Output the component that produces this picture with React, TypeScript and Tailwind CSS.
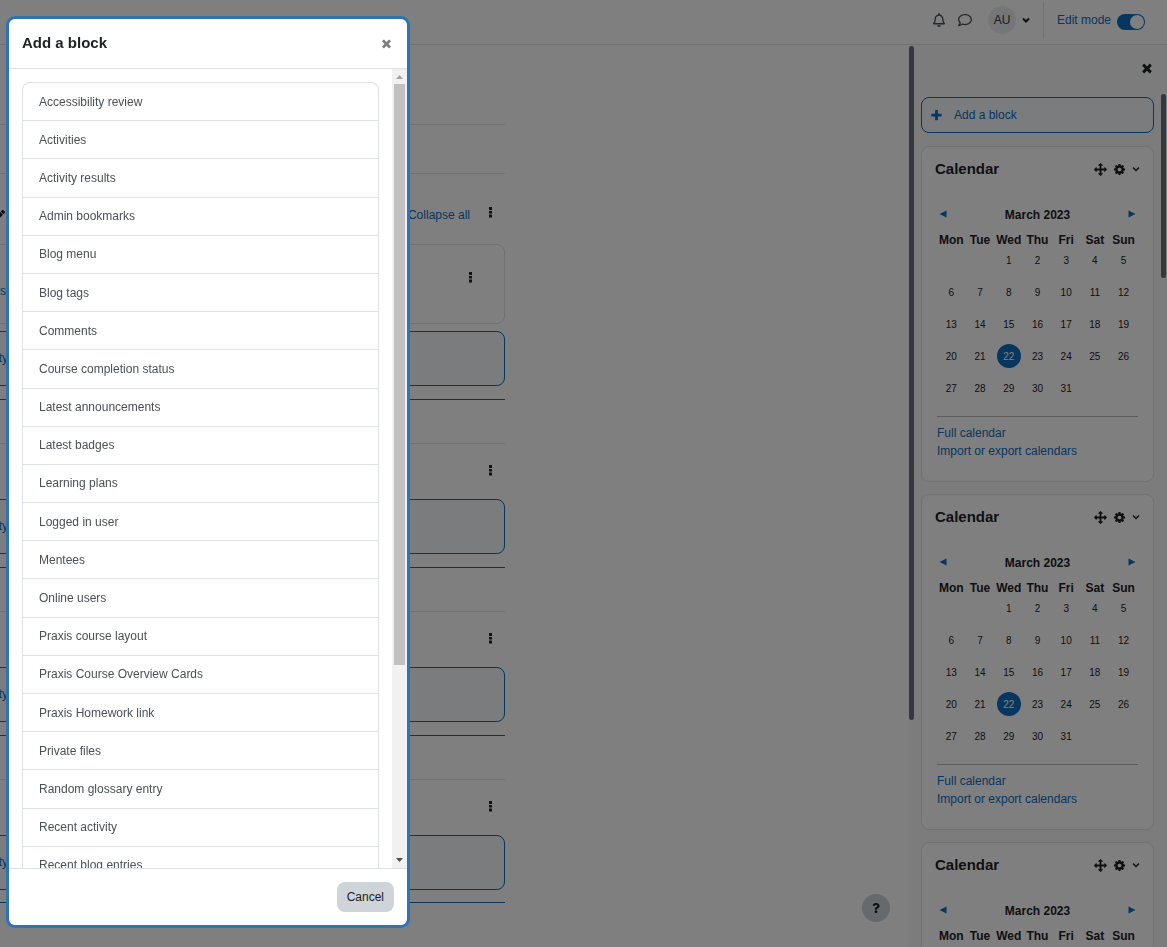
import { FaRegBell, FaRegComment, FaPen, FaQuestion } from "react-icons/fa";

const blocks = [
  "Accessibility review", "Activities", "Activity results", "Admin bookmarks", "Blog menu", "Blog tags",
  "Comments", "Course completion status", "Latest announcements", "Latest badges", "Learning plans",
  "Logged in user", "Mentees", "Online users", "Praxis course layout", "Praxis Course Overview Cards",
  "Praxis Homework link", "Private files", "Random glossary entry", "Recent activity", "Recent blog entries",
];

const weekdays = ["Mon", "Tue", "Wed", "Thu", "Fri", "Sat", "Sun"];
const weeks = [0, 1, 2, 3, 4].map((w) => weekdays.map((_, d) => w * 7 + d - 1));

const icons = {
  move: "M1792 896q0 26-19 45l-256 256q-19 19-45 19t-45-19-19-45v-128h-384v384h128q26 0 45 19t19 45-19 45l-256 256q-19 19-45 19t-45-19l-256-256q-19-19-19-45t19-45 45-19h128v-384h-384v128q0 26-19 45t-45 19-45-19l-256-256q-19-19-19-45t19-45l256-256q19-19 45-19t45 19 19 45v128h384v-384h-128q-26 0-45-19t-19-45 19-45l256-256q19-19 45-19t45 19l256 256q19 19 19 45t-19 45-45 19h-128v384h384v-128q0-26 19-45t45-19 45 19l256 256q19 19 19 45z",
  times: "M1490 1322q0 40-28 68l-136 136q-28 28-68 28t-68-28l-294-294-294 294q-28 28-68 28t-68-28l-136-136q-28-28-28-68t28-68l294-294-294-294q-28-28-28-68t28-68l136-136q28-28 68-28t68 28l294 294 294-294q28-28 68-28t68 28l136 136q28 28 28 68t-28 68l-294 294 294 294q28 28 28 68z",
  plus: "M1600 736v192q0 40-28 68t-68 28h-416v416q0 40-28 68t-68 28h-192q-40 0-68-28t-28-68v-416h-416q-40 0-68-28t-28-68v-192q0-40 28-68t68-28h416v-416q0-40 28-68t68-28h192q40 0 68 28t28 68v416h416q40 0 68 28t28 68z",
  cog: "M1152 896q0-106-75-181t-181-75-181 75-75 181 75 181 181 75 181-75 75-181zm512-109v222q0 12-8 23t-20 13l-185 28q-19 54-39 91 35 50 107 138 10 12 10 25t-9 23q-27 37-99 108t-94 71q-12 0-26-9l-138-108q-44 23-91 38-16 136-29 186-7 28-36 28h-222q-14 0-24.500-8.500t-11.500-21.500l-28-184q-49-16-90-37l-141 107q-10 9-25 9-14 0-25-11-126-114-165-168-7-10-7-23 0-12 8-23 15-21 51-66.500t54-70.500q-27-50-41-99l-183-27q-13-2-21-12.500t-8-23.500v-222q0-12 8-23t19-13l186-28q14-46 39-92-40-57-107-138-10-12-10-24 0-10 9-23 26-36 98.500-107.500t94.500-71.500q13 0 26 10l138 107q44-23 91-38 16-136 29-186 7-28 36-28h222q14 0 24.500 8.500t11.500 21.500l28 184q49 16 90 37l142-107q9-9 24-9 13 0 25 10 129 119 165 170 7 8 7 22 0 12-8 23-15 21-51 66.500t-54 70.500q26 50 41 98l183 28q13 2 21 12.500t8 23.500z",
};

function Icon({ name, className }: { name: keyof typeof icons; className: string }) {
  return (
    <svg viewBox="0 0 1792 1792" className={className} fill="currentColor" aria-hidden="true">
      <path d={icons[name]} />
    </svg>
  );
}

function Chevron({ width }: { width: number }) {
  return (
    <svg viewBox="0 0 8 8" className="size-2" fill="none" stroke="currentColor" strokeWidth={width} aria-hidden="true">
      <path d="M1 2.500l3 3 3-3" />
    </svg>
  );
}

function Dots() {
  return (
    <button aria-label="Edit" className="flex h-4 w-3 items-center justify-center text-[#1d2125]">
      <svg viewBox="0 0 4 12" className="h-3 w-1" fill="currentColor" aria-hidden="true">
        <path d="M0 1h3v3H0zM0 5h3v2.500H0zM0 8.500h3v3H0z" />
      </svg>
    </button>
  );
}

function AddActivity() {
  return (
    <button className="flex h-[55px] w-full items-center rounded-lg border border-[#0f6cbf] bg-[#f5f9fc] pb-px pl-[33px] text-[#0f6cbf]">
      Add an activity
    </button>
  );
}

function Section() {
  return (
    <section className="h-[168px] border-t border-[#0f6cbf]">
      <div className="h-[43px]" />
      <div className="flex h-14 items-start justify-end border-t border-[#dee2e6] pt-[18px] pr-2">
        <Dots />
      </div>
      <AddActivity />
    </section>
  );
}

function Calendar() {
  return (
    <section className="mb-3 h-[336px] shrink-0 rounded-lg border border-[#dee2e6] bg-white px-[13px] pt-3">
      <div className="flex h-5 items-center">
        <h2 className="flex-1 text-[15px] font-bold">Calendar</h2>
        <div className="flex items-center">
          <button aria-label="Move block" className="flex"><Icon name="move" className="size-[13px]" /></button>
          <button aria-label="Block settings" className="ml-[6px] flex"><Icon name="cog" className="size-[13px]" /></button>
          <button aria-label="Block menu" className="ml-[6px] flex"><Chevron width={1.5} /></button>
        </div>
      </div>
      <div className="mt-[25px] flex h-5 items-center justify-between px-1">
        <button aria-label="Previous month" className="text-[#0f6cbf]">
          <svg viewBox="0 0 8 8" className="size-2" fill="currentColor"><path d="M7.500 .5v7L.5 4z" /></svg>
        </button>
        <h3 className="pt-[2px] font-bold">March 2023</h3>
        <button aria-label="Next month" className="text-[#0f6cbf]">
          <svg viewBox="0 0 8 8" className="size-2" fill="currentColor"><path d="M.5 .5v7l7-3.500z" /></svg>
        </button>
      </div>
      <table className="mx-[2px] mt-2 w-[201px] table-fixed text-center">
        <thead>
          <tr>{weekdays.map((d) => <th key={d} className="h-4 p-0 leading-4 font-bold">{d}</th>)}</tr>
        </thead>
        <tbody className="text-[10px]">
          {weeks.map((week, w) => (
            <tr key={w}>
              {week.map((day) => (
                <td key={day} className="h-8 p-0 align-top">
                  {day > 0 && day < 32 && (
                    <span className={day === 22 ? "mx-auto flex size-6 items-center justify-center rounded-full bg-[#0f6cbf] text-white" : "mx-auto flex size-6 items-center justify-center"}>
                      {day}
                    </span>
                  )}
                </td>
              ))}
            </tr>
          ))}
        </tbody>
      </table>
      <div className="mx-[2px] mt-2 flex flex-col border-t border-[#bbbbbb] pt-[7px] leading-[18px] text-[#0f6cbf]">
        <a href="#full">Full calendar</a>
        <a href="#export">Import or export calendars</a>
      </div>
    </section>
  );
}

export default function App() {
  return (
    <div className="relative flex h-screen flex-col overflow-hidden bg-white font-['Liberation_Sans',Arial,sans-serif] text-[12px] text-[#1d2125]">
      <header className="flex h-[45px] shrink-0 justify-end border-b border-[#dee2e6] pr-[22px]">
        <div className="flex h-10 items-center">
          <button aria-label="Notifications" className="text-[#495057]"><FaRegBell size={14} /></button>
          <button aria-label="Messages" className="ml-3 text-[#495057]"><FaRegComment size={14} /></button>
          <button className="ml-4 flex items-center" aria-label="User menu">
            <span className="mr-[6px] flex size-7 items-center justify-center rounded-full bg-[#e9ecef] text-[#343a40]">AU</span>
            <Chevron width={2} />
          </button>
          <span className="mt-[2px] ml-[13px] h-9 w-px bg-[#dee2e6]" />
          <label htmlFor="edit" className="ml-[13px] text-[#0f6cbf]">Edit mode</label>
          <span className="relative mt-1 ml-[6px] flex h-4 w-7">
            <input id="edit" type="checkbox" role="switch" defaultChecked className="h-4 w-7 appearance-none rounded-full bg-[#0f6cbf]" />
            <span className="pointer-events-none absolute top-px right-px size-[14px] rounded-full bg-white" />
          </span>
        </div>
      </header>

      <div className="flex min-h-0 flex-1">
        <main className="min-w-0 flex-1 overflow-hidden">
          <div className="-ml-[104px] w-[609px]">
            <div className="h-20 border-b border-[#dee2e6]" />
            <div className="h-[49px] border-b border-[#dee2e6]" />
            <div className="flex h-[70px] items-start pt-[30px] pr-2">
              <button aria-label="Rename section" className="mt-[6px] ml-[98px]"><FaPen size={11} /></button>
              <span className="flex-1" />
              <a href="#collapse" className="mt-[2px] mr-[15px] text-[#0f6cbf]">Collapse all</a>
              <Dots />
            </div>
            <div className="mb-[7px] flex h-20 items-start rounded-lg border border-[#dee2e6] pt-6 pr-[27px]">
              <a href="#course" className="mt-[13px] ml-[77px] text-[#0f6cbf]">Course</a>
              <span className="flex-1" />
              <Dots />
            </div>
            <AddActivity />
            <div className="h-[13px]" />
            <Section />
            <Section />
            <Section />
            <div className="-mt-px border-t border-[#0f6cbf]" />
          </div>
        </main>

        <aside className="flex w-[258px] shrink-0 bg-[#f8f9fa] pr-px">
          <div className="mt-[1px] h-[674px] w-[5px] rounded-full bg-[#6a737b]" />
          <div className="flex min-w-0 flex-1 flex-col overflow-hidden px-[7px]">
            <div className="flex h-[52px] shrink-0 items-start justify-end pt-4">
              <button aria-label="Close block drawer" className="flex"><Icon name="times" className="size-[14px]" /></button>
            </div>
            <button className="mb-[13px] flex h-9 shrink-0 items-center rounded-lg border border-[#0f6cbf] bg-[#f5f9fc] pl-2 text-[#0f6cbf]">
              <Icon name="plus" className="size-[13px]" /><span className="ml-[11px]">Add a block</span>
            </button>
            <Calendar />
            <Calendar />
            <Calendar />
          </div>
          <div className="mt-[49px] h-[184px] w-[5px] rounded-full bg-[#6a737b]" />
        </aside>
      </div>

      <button aria-label="Help" className="absolute right-[277px] bottom-[25px] flex size-7 items-center justify-center rounded-full bg-[#ced4da]">
        <FaQuestion size={10} />
      </button>

      <div className="fixed inset-0 flex bg-black/50 px-[9px] pt-[19px] pb-[22px]">
        <div role="dialog" aria-labelledby="title" className="flex w-[398px] max-w-full flex-col overflow-hidden rounded-md bg-white ring-3 ring-[#2d74b5]">
          <div className="flex h-[50px] shrink-0 items-center justify-between border-b border-[#dee2e6] pr-[14px] pl-[13px]">
            <h1 id="title" className="text-[15px] font-bold">Add a block</h1>
            <button aria-label="Close" className="flex text-[#7f7f7f]"><Icon name="times" className="size-[13px]" /></button>
          </div>
          <div className="flex min-h-0 flex-1">
            <div className="min-w-0 flex-1 overflow-hidden p-[13px]">
              <ul className="grid h-[803px] auto-rows-fr rounded-t-lg border border-b-0 border-[#dee2e6]">
                {blocks.map((b) => (
                  <li key={b} className="flex border-b border-[#dee2e6]">
                    <a href="#block" className="flex flex-1 items-center px-4 text-[#495057]">{b}</a>
                  </li>
                ))}
              </ul>
            </div>
            <div className="flex w-[15px] flex-col items-center bg-[#f1f1f1]">
              <svg viewBox="0 0 15 15" className="size-[15px]" fill="#a3a3a3"><path d="M4 10h7L7.500 6z" /></svg>
              <div className="h-[581px] w-[11px] bg-[#c1c1c1]" />
              <span className="flex-1" />
              <svg viewBox="0 0 15 15" className="size-[15px]" fill="#505050"><path d="M4 5h7L7.500 9z" /></svg>
            </div>
          </div>
          <div className="flex h-[57px] shrink-0 items-center justify-end border-t border-[#dee2e6] pr-[13px]">
            <button className="h-[30px] rounded-lg bg-[#ced4da] px-[10px]">Cancel</button>
          </div>
        </div>
      </div>
    </div>
  );
}
